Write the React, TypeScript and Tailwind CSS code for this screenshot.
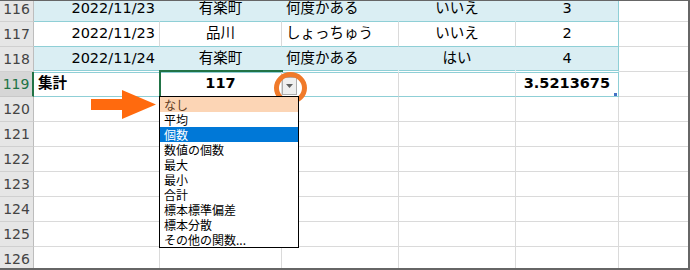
import React from "react";

type Kind = "band" | "white" | "total" | "empty";
type Row = { n: number; kind: Kind; cells: string[] };

const rows: Row[] = [
  { n: 116, kind: "band", cells: ["2022/11/23", "有楽町", "何度かある", "いいえ", "3"] },
  { n: 117, kind: "white", cells: ["2022/11/23", "品川", "しょっちゅう", "いいえ", "2"] },
  { n: 118, kind: "band", cells: ["2022/11/24", "有楽町", "何度かある", "はい", "4"] },
  { n: 119, kind: "total", cells: ["集計", "117", "", "", "3.5213675"] },
  { n: 120, kind: "empty", cells: ["", "", "", "", ""] },
  { n: 121, kind: "empty", cells: ["", "", "", "", ""] },
  { n: 122, kind: "empty", cells: ["", "", "", "", ""] },
  { n: 123, kind: "empty", cells: ["", "", "", "", ""] },
  { n: 124, kind: "empty", cells: ["", "", "", "", ""] },
  { n: 125, kind: "empty", cells: ["", "", "", "", ""] },
  { n: 126, kind: "empty", cells: ["", "", "", "", ""] },
];

const widths = ["w-[126px]", "w-[122px]", "w-[117px]", "w-[117px]", "w-[103px]"];

function alignFor(kind: Kind, i: number): string {
  if (kind === "total") {
    if (i === 0) return "justify-start pl-[4px] font-bold";
    if (i === 1) return "justify-center font-bold";
    if (i === 4) return "justify-end pr-[8px] font-bold";
    return "justify-center";
  }
  if (i === 0) return "justify-end pr-[4px]";
  if (i === 2) return "justify-start pl-[4px]";
  return "justify-center";
}

function cellBorder(kind: Kind, i: number): string {
  const isE = i === 4;
  if (kind === "band") {
    const r = isE ? "border-r-[#8fcfd6]" : "border-r-[#daeef3]";
    return `bg-[#daeef3] border-r ${r}`;
  }
  if (kind === "white") {
    return `bg-white border-r ${isE ? "border-r-[#8fcfd6]" : "border-r-[#dadada]"}`;
  }
  if (kind === "total") {
    return `bg-white border-r ${isE ? "border-r-[#8fcfd6]" : "border-r-[#dadada]"}`;
  }
  return "bg-white border-r border-r-[#dadada]";
}

function bottomFor(row: Row): string {
  if (row.n === 118) return "border-b border-b-white shadow-[inset_0_-1px_0_#8fcfd6]";
  if (row.n === 119) return "border-b border-b-[#8fcfd6] shadow-[inset_0_1px_0_#8fcfd6]";
  if (row.kind === "band" || row.kind === "white") return "border-b border-b-[#8fcfd6]";
  return "border-b border-b-[#dadada]";
}

const items = [
  "なし",
  "平均",
  "個数",
  "数値の個数",
  "最大",
  "最小",
  "合計",
  "標本標準偏差",
  "標本分散",
  "その他の関数...",
];

export default function App() {
  return (
    <div className="w-[690px] h-[270px] bg-white">
      <div className="relative w-[690px] h-[270px] overflow-hidden border-t border-r-2 border-b-2 border-[#666666] bg-white font-['DejaVu_Sans','Noto_Sans_CJK_JP',sans-serif] text-[14.5px] text-black">
        <div className="-mt-[4px] flex flex-col">
          {rows.map((row) => {
            const sel = row.n === 119;
            return (
              <div key={row.n} className="flex h-[25px]">
                <div
                  className={
                    sel
                      ? "w-[34px] h-[25px] flex items-center justify-center bg-[#d6d6d6] text-[#217346] text-[14px] border-r-2 border-r-[#217346] border-b border-b-[#c8c8c8]"
                      : "w-[34px] h-[25px] flex items-center justify-center bg-[#e6e6e6] text-[#444444] text-[14px] border-r border-r-[#bdbdbd] border-b border-b-[#d0d0d0]"
                  }
                >
                  {row.n}
                </div>
                {row.cells.map((c, i) => (
                  <div
                    key={i}
                    className={`${widths[i]} h-[25px] flex items-center whitespace-nowrap ${cellBorder(
                      row.kind,
                      i
                    )} ${bottomFor(row)} ${alignFor(row.kind, i)}`}
                  >
                    {c}
                  </div>
                ))}
                <div className="flex-1 h-[25px] bg-white border-b border-b-[#dadada]" />
              </div>
            );
          })}
        </div>

        {/* selection border on B119 */}
        <div className="absolute left-[159px] top-[69px] w-[124px] h-[28px] border-t-2 border-l-2 border-[#217346]" />

        {/* table resize handle */}
        <div className="absolute left-[614px] top-[92px] w-[3px] h-[3px] bg-[#4472c4]" />

        {/* dropdown button */}
        <div className="absolute left-[282px] top-[76px] w-[15px] h-[18px] bg-[#efefef] border border-[#adadad] flex items-center justify-center">
          <svg width="7" height="4" viewBox="0 0 7 4">
            <polygon points="0,0 7,0 3.5,4" fill="#606060" />
          </svg>
        </div>

        {/* orange circle */}
        <svg className="absolute left-[272px] top-[69px]" width="37" height="36" viewBox="0 0 37 36">
          <ellipse cx="18.5" cy="18" rx="14" ry="13.5" fill="none" stroke="#f07a2a" strokeWidth="5" />
        </svg>

        {/* orange arrow */}
        <svg className="absolute left-[90px] top-[88px]" width="68" height="32" viewBox="0 0 68 32">
          <polygon points="1,10 32,10 32,1 66,15.5 32,30 32,21 1,21" fill="#ff6a0e" />
        </svg>

        {/* dropdown list */}
        <div className="absolute left-[159px] top-[95px] w-[140px] h-[152px] bg-white border border-black flex flex-col font-['Noto_Sans_CJK_JP',sans-serif] text-[12px]">
          {items.map((it, i) => (
            <div
              key={it}
              className={
                i === 0
                  ? "h-[15px] leading-[15px] pl-[4px] bg-[#fcd5b5] text-[#5c3a22] whitespace-nowrap"
                  : i === 2
                  ? "h-[15px] leading-[15px] pl-[4px] bg-[#0078d7] text-white whitespace-nowrap"
                  : "h-[15px] leading-[15px] pl-[4px] text-black whitespace-nowrap"
              }
            >
              {it}
            </div>
          ))}
        </div>
      </div>
    </div>
  );
}
